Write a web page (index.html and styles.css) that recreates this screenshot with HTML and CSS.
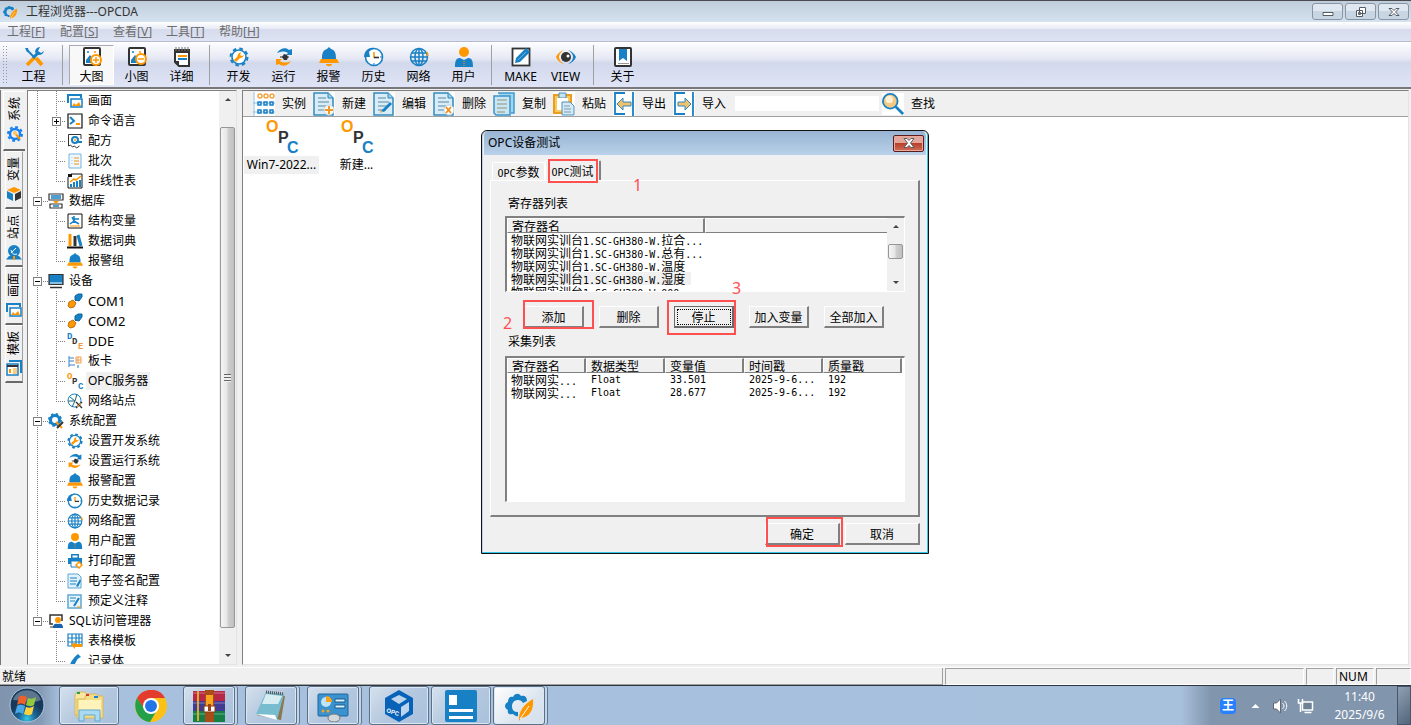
FILE: index.html
```html
<!DOCTYPE html>
<html lang="zh-CN">
<head>
    <meta charset="UTF-8">
    <meta name="viewport" content="width=device-width, initial-scale=1.0">
    <title>工程浏览器---OPCDA</title>
    <link rel="stylesheet" href="styles.css">
</head>
<body>
    <!-- Icon library -->
    <svg class="icon-library" aria-hidden="true">
        <symbol id="i-app" viewBox="0 0 32 32">
            <path d="M15 26c-3 1-4-2-6-2-3 1-5-1-4-4-4-2-4-6 0-8 0-4 2-6 5-5 2-4 6-4 8-1 4-1 6 1 6 5l-4 2c-2-5-11-4-11 3 0 5 3 6 6 6z" fill="#1880c4"/>
            <path d="M30 9c1 10-3 18-12 19l-2 3c-1-9 5-17 14-22z" fill="#ff9800"/>
            <path d="M17 29l9-13" stroke="#fff" stroke-width="1"/>
        </symbol>
        <symbol id="i-tools" viewBox="0 0 20 20">
            <path d="M3 3l7 7" stroke="#1880c4" stroke-width="2"/>
            <path d="M12 11l6 7" stroke="#ff9800" stroke-width="4"/>
            <path d="M1 1l3 0 1 4-2 0z" fill="#1880c4"/>
            <path d="M3 18l8-8" stroke="#ff9800" stroke-width="3.500"/>
            <path d="M9 11l5-5" stroke="#1880c4" stroke-width="3"/>
            <path d="M16 0c-4 0-6 4-4 7 3 2 7 1 8-3l-3 2-3-2z" fill="#1880c4"/>
        </symbol>
        <symbol id="i-large" viewBox="0 0 20 20">
            <rect x="2" y="1" width="16" height="17" rx="1" fill="#fff" stroke="#333" stroke-width="2"/>
            <path d="M4 13l4-5 4 5v3H4z" fill="#1880c4"/><circle cx="6" cy="5" r="1" fill="#1880c4"/><circle cx="13" cy="5" r="1" fill="#ff9800"/>
            <circle cx="14" cy="13" r="5" fill="#fff" stroke="#ff9800" stroke-width="2"/>
            <path d="M11 13h6M14 10v6" stroke="#ff9800" stroke-width="1.500"/>
        </symbol>
        <symbol id="i-small" viewBox="0 0 20 20">
            <rect x="2" y="1" width="16" height="17" rx="1" fill="#fff" stroke="#333" stroke-width="2"/>
            <path d="M4 13l4-5 4 5v3H4z" fill="#1880c4"/><circle cx="6" cy="5" r="1" fill="#1880c4"/><circle cx="13" cy="5" r="1" fill="#ff9800"/>
            <circle cx="14" cy="12" r="5" fill="#fff" stroke="#ff9800" stroke-width="2"/>
            <path d="M11 12h6" stroke="#ff9800" stroke-width="1.500"/>
        </symbol>
        <symbol id="i-detail" viewBox="0 0 20 20">
            <path d="M3 4v11l4 4h10V3" fill="#fff" stroke="#333" stroke-width="2"/>
            <path d="M2 2h16v4H2z" fill="#333"/><path d="M4 0v4M7 0v4M10 0v4M13 0v4M16 0v4" stroke="#777" stroke-width="1"/>
            <path d="M3 14h4v5z" fill="#333"/>
            <path d="M6 9h9" stroke="#ff9800" stroke-width="2"/><path d="M6 12h9" stroke="#1880c4" stroke-width="2"/>
        </symbol>
        <symbol id="i-dev" viewBox="0 0 20 20">
            <circle cx="10" cy="10" r="8.500" fill="none" stroke="#1880c4" stroke-width="2" stroke-dasharray="3.600 3.080"/>
            <circle cx="10" cy="10" r="7" fill="#fff" stroke="#1880c4" stroke-width="1.600"/>
            <path d="M6 14l4-4" stroke="#ff9800" stroke-width="3"/><path d="M12 5c-3 1-4 3-3 5 2 2 5 1 6-2l-2 1-2-1z" fill="#ff9800"/>
        </symbol>
        <symbol id="i-run" viewBox="0 0 20 20">
            <path d="M3 6c3-5 9-6 12-3l3-1v6h-6l2-2c-3-2-7-2-11 0z" fill="#1880c4"/>
            <path d="M17 14c-3 5-9 6-12 3l-3 1v-6h6l-2 2c3 2 7 2 11 0z" fill="#ff9800"/>
            <path d="M10 7l3 1 1 2-1 3-3 0-2-3z" fill="#333"/><path d="M6 10h9" stroke="#333"/>
        </symbol>
        <symbol id="i-bell" viewBox="0 0 20 20">
            <path d="M10 0l2 2c4 1 5 4 5 10H3c0-6 1-9 5-10z" fill="#1880c4"/>
            <path d="M2 12h16l2 4H0z" fill="#ff9800"/><path d="M7 17h6c0 3-6 3-6 0z" fill="#ff9800"/>
        </symbol>
        <symbol id="i-clock" viewBox="0 0 20 20">
            <circle cx="10" cy="10" r="8.500" fill="#fff" stroke="#1880c4" stroke-width="1.600"/>
            <path d="M0 10h6L5 5C8 1 10 3 10 1 4 0 0 5 0 10z" fill="#1880c4"/>
            <path d="M10 5v6" stroke="#ff9800" stroke-width="1.600"/><path d="M10 10.500h5" stroke="#333" stroke-width="1.600"/>
            <path d="M10 18v-2M18 10h-2" stroke="#1880c4"/>
        </symbol>
        <symbol id="i-globe" viewBox="0 0 20 20">
            <g fill="none" stroke="#1880c4" stroke-width="1.500"><circle cx="10" cy="10" r="8.500"/><ellipse cx="10" cy="10" rx="4" ry="8.500"/><path d="M10 1v18M2 10h16M3 6h14M3 14h14"/></g>
            <path d="M18 5l1 4" stroke="#ff9800" stroke-width="1.500"/>
        </symbol>
        <symbol id="i-user" viewBox="0 0 20 20">
            <circle cx="10" cy="5" r="5" fill="#ff9800"/><path d="M1 20c0-6 1-9 5-9l4 2 4-2c4 0 5 3 5 9z" fill="#1880c4"/><path d="M10 14v6" stroke="#ff9800" stroke-dasharray="1 1"/>
        </symbol>
        <symbol id="i-make" viewBox="0 0 20 20">
            <rect x="1.500" y="1.500" width="17" height="17" fill="#fff" stroke="#333" stroke-width="1.800"/>
            <path d="M4 16l1-5L15 1l4 4L9 15z" fill="#1880c4"/><path d="M7 13l8-8" stroke="#69b2e0"/>
        </symbol>
        <symbol id="i-view" viewBox="0 0 20 20">
            <path d="M8 3C5 4 1 7 0 10c1 3 4 6 8 7-3-2-5-4-5-7s2-5 5-7z" fill="#ff9800"/>
            <path d="M12 3c3 1 7 4 8 7-1 3-4 6-8 7 3-2 5-4 5-7s-2-5-5-7z" fill="#1880c4"/>
            <circle cx="10" cy="10" r="5" fill="#333"/><circle cx="12" cy="9" r="1.500" fill="#fff"/>
        </symbol>
        <symbol id="i-about" viewBox="0 0 20 20">
            <rect x="2" y="1" width="16" height="18" rx="1" fill="#fff" stroke="#333" stroke-width="2"/><path d="M6 2h8v12l-4-3-4 3z" fill="#1880c4"/><path d="M5 16.500h11" stroke="#999"/>
        </symbol>
        <symbol id="i-list" viewBox="0 0 22 24">
            <path fill="#fff" d="M0 0h22v24H0z"/><path d="M1 0v24M0 11h22M0 20h22" stroke="#8bbcdf"/>
            <g fill="none" stroke-width="1.500"><g stroke="#f0a443"><circle cx="7" cy="4" r="2"/><circle cx="13" cy="4" r="2"/><circle cx="19" cy="4" r="2"/></g><g stroke="#1880c4"><path d="M5 10h3v3H5zM11 10h3v3h-3zM17 10h3v3h-3zM5 18h3v3H5zM11 18h3v3h-3zM17 18h3v3h-3z"/></g></g>
        </symbol>
        <symbol id="i-doc" viewBox="0 0 22 24">
            <path fill="#fff" d="M0 0h22v24H0z"/><path d="M1 1h14l5 5v17H1z" fill="#d9edf8" stroke="#3188bd" stroke-width="1.500"/><path d="M15 1v5h5" fill="#9bd0ec" stroke="#3188bd"/>
            <path d="M5 6h8M5 10h11M5 14h10M5 18h8" stroke="#87aabd" stroke-width="1.400"/>
        </symbol>
        <symbol id="i-new" viewBox="0 0 22 24"><use href="#i-doc"/><circle cx="16" cy="18" r="5" fill="#fff9eb" stroke="#c0d9e7"/><path d="M12 18h8M16 14v8" stroke="#f29626" stroke-width="2"/></symbol>
        <symbol id="i-edit" viewBox="0 0 22 24"><use href="#i-doc"/><path d="M8 19l9-9 2 2-8 8z" fill="#1880c4"/><path d="M9 20l-2 1 1-3" fill="#f29626"/></symbol>
        <symbol id="i-delete" viewBox="0 0 22 24"><use href="#i-doc"/><circle cx="16" cy="18" r="5" fill="#fff" stroke="#bdd5e4"/><path d="M13 15l5 6M18 15l-5 6" stroke="#f28c16" stroke-width="1.800"/></symbol>
        <symbol id="i-copy" viewBox="0 0 22 24"><path d="M5 1h16v20h-3" fill="#9ed7ef" stroke="#3c9bd0" stroke-width="1.500"/><path d="M1 4h16v19H3l-2-2z" fill="#c8e6f5" stroke="#3c93c8" stroke-width="1.500"/><path d="M4 8h10M4 12h10M4 16h10M4 20h8" stroke="#a7ae9a" stroke-width="1.500"/></symbol>
        <symbol id="i-paste" viewBox="0 0 22 24"><path fill="#fff" d="M0 0h22v24H0z"/><path d="M1 3h17v18H1z" fill="#f8c95b" stroke="#ec9c1f" stroke-width="2"/><path d="M6 1h7v5H6z" fill="#c5e4f4" stroke="#488eb7"/><path d="M4 6h11v12H4z" fill="#fff"/><path d="M9 10h8l4 4v9H9z" fill="#d5eaf6" stroke="#508eb4"/><path d="M11 14h6M11 17h7M11 20h7" stroke="#749db5"/></symbol>
        <symbol id="i-export" viewBox="0 0 22 24"><path fill="#fff" d="M0 0h22v24H0z"/><path d="M12 1H2v21h10M20 0v24" fill="none" stroke="#1880c4" stroke-width="1.800"/><path d="M4 12l6-6v4h8v4h-8v4z" fill="#f3c16c" stroke="#2f88bd"/></symbol>
        <symbol id="i-import" viewBox="0 0 22 24"><path fill="#fff" d="M0 0h22v24H0z"/><path d="M12 1H2v21h10M20 0v24" fill="none" stroke="#1880c4" stroke-width="1.800"/><path d="M18 12l-6-6v4H5v4h7v4z" fill="#f3c16c" stroke="#2f88bd"/></symbol>
        <symbol id="i-search" viewBox="0 0 24 24"><path fill="#fff" d="M0 0h24v24H0z"/><path d="M15 15l8 8" stroke="#1880c4" stroke-width="3"/><circle cx="9" cy="9" r="8" fill="#f4ca82" stroke="#1880c4" stroke-width="2"/><circle cx="8" cy="7" r="4" fill="#fff1d5"/></symbol>
        <symbol id="i-picture" viewBox="0 0 16 16"><path d="M1 10V2h13v3" fill="none" stroke="#1880c4" stroke-width="2"/><path d="M4 6h11v8H4z" fill="#fff" stroke="#1880c4" stroke-width="1.500"/><path d="M5 13l2-3 2 2 3-3 2 4z" fill="#ff9800"/></symbol>
        <symbol id="i-command" viewBox="0 0 16 16"><path d="M1 1h14v14H1z" fill="#fff" stroke="#111" stroke-width="1.200"/><path d="M3 4l4 4-4 3" fill="none" stroke="#1880c4" stroke-width="2"/><path d="M9 11h4" stroke="#ff9800" stroke-width="2"/></symbol>
        <symbol id="i-recipe" viewBox="0 0 16 16"><path d="M14 6V1.500H1.500V13l2-1 2 2 2-1 2 2 3-2" fill="#fff" stroke="#333"/><circle cx="8" cy="7" r="3" fill="#fff" stroke="#1880c4" stroke-width="2"/><path d="M9 9h6" stroke="#1880c4" stroke-width="2"/><circle cx="8" cy="7" r="1" fill="#ff9800"/></symbol>
        <symbol id="i-batch" viewBox="0 0 16 16"><path d="M2 1h12v14H2z" fill="#eef8fe" stroke="#76b5de"/><path d="M5 4v9" stroke="#9cc9e7" stroke-dasharray="1 2"/><path d="M7 5h5M7 8h5M7 11h5" stroke="#f2c48b" stroke-width="2"/></symbol>
        <symbol id="i-chart" viewBox="0 0 16 16"><path d="M4 1h11v14H1V4z" fill="#fff" stroke="#111"/><path d="M1 1h4v3H1z" fill="#111"/><path d="M4 14v-3M7 14v-5M10 14V8M13 14V7" stroke="#1880c4" stroke-width="2"/><path d="M3 9l4-3 2 1 5-4" fill="none" stroke="#ff9800" stroke-width="1.500"/></symbol>
        <symbol id="i-database" viewBox="0 0 16 16"><path d="M1 1h14v6H1zM2 11h12v4H2z" fill="#fff" stroke="#333" stroke-width="1.200"/><path d="M3 3h10M3 5h10M5 13h6" stroke="#1880c4" stroke-width="1.300"/><path d="M5 8h6l-3 3z" fill="#ff9800"/></symbol>
        <symbol id="i-struct" viewBox="0 0 16 16"><path d="M1 1h14v14H1z" fill="#fff" stroke="#111"/><path d="M7 3v5l-4 3M7 8l5 3M7 6h5M5 4l2 4" fill="none" stroke="#1880c4" stroke-width="1.500"/><path d="M3 13h10" stroke="#ff9800"/></symbol>
        <symbol id="i-books" viewBox="0 0 16 16"><path d="M3 1v12" stroke="#ff9800" stroke-width="3"/><path d="M8 3v10" stroke="#333" stroke-width="3"/><path d="M11 2l3 11" stroke="#1880c4" stroke-width="3"/><path d="M0 14.500h16" stroke="#111" stroke-width="2"/></symbol>
        <symbol id="i-monitor" viewBox="0 0 16 16"><path d="M1 1.500h14v10H1z" fill="#1880c4" stroke="#333" stroke-width="1.200"/><path d="M2 10h12" stroke="#fff"/><path d="M2 14.500h12" stroke="#333" stroke-width="1.500"/></symbol>
        <symbol id="i-plug" viewBox="0 0 16 16"><path d="M15 1L7 9" stroke="#333"/><path d="M8 3l3-2h4v3l-3 4-4-1z" fill="#1880c4" stroke="#0b66a4"/><path d="M2 9l4-2 3 3-2 4-4 1-2-2z" fill="#ff9800" stroke="#b77418"/></symbol>
        <symbol id="i-card" viewBox="0 0 16 16"><path d="M2 3v11M2 5h5M2 8h5M2 12h6" stroke="#3b83c6"/><path d="M9 4h5v6H9zM9 7h5M11 4v6" fill="none" stroke="#ef9b4a"/><path d="M11 12v3" stroke="#1880c4"/></symbol>
        <symbol id="i-net" viewBox="0 0 16 16"><circle cx="7.500" cy="7.500" r="6.500" fill="#fff" stroke="#1880c4"/><path d="M1 8h7M3 4l5 4 2-7M8 8l-3 6" fill="none" stroke="#267"/><path d="M9 9l6 6M15 9l-6 6" stroke="#333" stroke-width="1.400"/><path d="M10 14l4-4" stroke="#ff9800"/></symbol>
        <symbol id="i-config" viewBox="0 0 16 16"><circle cx="7" cy="7" r="4.500" fill="none" stroke="#1880c4" stroke-width="3"/><circle cx="7" cy="7" r="6" fill="none" stroke="#1880c4" stroke-width="2" stroke-dasharray="2.400 2.310"/><path d="M8 9l6 6" stroke="#ff9800" stroke-width="2"/><path d="M15 9l-6 6" stroke="#333" stroke-width="2"/></symbol>
        <symbol id="i-printer" viewBox="0 0 16 16"><path d="M4 5V1h8v4M1 5h14v6H1z" fill="#1880c4"/><path d="M5 2h6v3H5zM4 8h8v6H4z" fill="#fff" stroke="#1880c4"/><path d="M12 9l3 3-3 3-3-3z" fill="#fff" stroke="#ff9800" stroke-width="1.500"/></symbol>
        <symbol id="i-sign" viewBox="0 0 16 16"><path d="M1 1h10l3 3v11H1z" fill="#e3f2fa" stroke="#5da7d4"/><path d="M3 5h7M3 8h7M3 11h6" stroke="#1880c4"/><path d="M9 13l4-7 1 2-3 6z" fill="#1880c4"/></symbol>
        <symbol id="i-note" viewBox="0 0 16 16"><path d="M1 2h13v13H1z" fill="#e8f5fb" stroke="#5da7d4" stroke-width="1.500"/><path d="M3 5h6M3 8h5" stroke="#1880c4"/><path d="M7 13l5-8" stroke="#1880c4" stroke-width="2"/><path d="M10 14h4" stroke="#ff9800"/></symbol>
        <symbol id="i-sql" viewBox="0 0 16 16"><path d="M5 11H2V2h12v6" fill="none" stroke="#333" stroke-width="1.500"/><circle cx="10" cy="7" r="3" fill="#ff9800"/><path d="M5 15c0-4 2-5 5-4 4-1 5 1 5 4z" fill="#1761ad"/><path d="M2 14h4" stroke="#333"/></symbol>
        <symbol id="i-table" viewBox="0 0 16 16"><path d="M1 1h14v12H1zM1 5h14M1 9h14M5 1v12M9 1v12M12 1v12" fill="#fff" stroke="#1880c4" stroke-width="1.200"/><path d="M4 12l4-3v2h7v3H8v2z" fill="#ff9800"/></symbol>
        <symbol id="i-pen" viewBox="0 0 16 16"><path d="M2 15c1-5 4-10 9-14l3 3c-4 1-5 5-7 9z" fill="#1880c4"/><path d="M1 15h5" stroke="#333"/></symbol>
        <symbol id="i-gear" viewBox="0 0 16 16"><circle cx="8" cy="8" r="5" fill="none" stroke="#1880f0" stroke-width="2.500"/><circle cx="8" cy="8" r="7" fill="none" stroke="#1880f0" stroke-width="2" stroke-dasharray="2.800 2.700"/><path d="M7 6l6 7" stroke="#ff9800" stroke-width="2"/><circle cx="8" cy="7" r="2" fill="#ffc56c"/></symbol>
        <symbol id="i-cube" viewBox="0 0 16 16"><path d="M8 1l7 3-7 3-7-3z" fill="#ff9800"/><path d="M1 5l6 3v7l-6-3z" fill="#1880c4"/><path d="M15 5L9 8v7l6-3z" fill="#333"/></symbol>
        <symbol id="i-station" viewBox="0 0 16 16"><circle cx="8" cy="7" r="6" fill="#1880c4"/><path d="M5 9l5-5M5 6c1 4 3 5 6 4" fill="none" stroke="#fff"/><path d="M0 15.500l3-3.500h10l3 3.500z" fill="#1880c4"/><path d="M8 12v4" stroke="#ff9800" stroke-width="2"/></symbol>
        <symbol id="i-template" viewBox="0 0 16 16"><path d="M3 1h12v12" fill="none" stroke="#1880c4" stroke-width="2"/><path d="M1 4h11v11H1z" fill="#fff" stroke="#1880c4" stroke-width="1.500"/><path d="M1 6h11" stroke="#333" stroke-width="2"/><path d="M3 9h2v4H3z" fill="#ff9800"/><path d="M7 9h4M7 11h4M7 13h4" stroke="#ff9800"/></symbol>
    </svg>

    <!-- Title bar -->
    <header class="titlebar">
        <svg class="title-icon"><use href="#i-app"/></svg>
        <h1>工程浏览器---OPCDA</h1>
        <div class="window-buttons">
            <button aria-label="最小化"><svg viewBox="0 0 16 12"><path d="M3 6.500h10v3H3z"/></svg></button>
            <button aria-label="还原"><svg viewBox="0 0 16 12"><path d="M6.500 1.500h6v6h-6zM3.500 4.500h6v6h-6zM5.500 6.500h2v2h-2z"/></svg></button>
            <button aria-label="关闭"><svg viewBox="0 0 16 12"><path d="M3 2.500h3l2 2 2-2h3L9.500 6l3.500 3.500h-3l-2-2-2 2H3L6.500 6z"/></svg></button>
        </div>
    </header>

    <nav class="menubar">
        <button>工程[<u>F</u>]</button>
        <button>配置[<u>S</u>]</button>
        <button>查看[<u>V</u>]</button>
        <button>工具[<u>T</u>]</button>
        <button>帮助[<u>H</u>]</button>
    </nav>

    <!-- Main toolbar -->
    <div class="toolbar">
        <span class="gripper"></span>
        <button class="tool"><svg><use href="#i-tools"/></svg>工程</button>
        <span class="separator"></span>
        <button class="tool active"><svg><use href="#i-large"/></svg>大图</button>
        <button class="tool"><svg><use href="#i-small"/></svg>小图</button>
        <button class="tool"><svg><use href="#i-detail"/></svg>详细</button>
        <span class="separator"></span>
        <button class="tool"><svg><use href="#i-dev"/></svg>开发</button>
        <button class="tool"><svg><use href="#i-run"/></svg>运行</button>
        <button class="tool"><svg><use href="#i-bell"/></svg>报警</button>
        <button class="tool"><svg><use href="#i-clock"/></svg>历史</button>
        <button class="tool"><svg><use href="#i-globe"/></svg>网络</button>
        <button class="tool"><svg><use href="#i-user"/></svg>用户</button>
        <span class="separator"></span>
        <button class="tool"><svg><use href="#i-make"/></svg>MAKE</button>
        <button class="tool"><svg><use href="#i-view"/></svg>VIEW</button>
        <span class="separator"></span>
        <button class="tool"><svg><use href="#i-about"/></svg>关于</button>
    </div>

    <main class="workspace">
        <!-- Side tabs -->
        <div class="side-tabs">
            <button class="side-tab active"><span>系统</span><svg><use href="#i-gear"/></svg></button>
            <button class="side-tab"><span>变量</span><svg><use href="#i-cube"/></svg></button>
            <button class="side-tab"><span>站点</span><svg><use href="#i-station"/></svg></button>
            <button class="side-tab"><span>画面</span><svg><use href="#i-picture"/></svg></button>
            <button class="side-tab"><span>模板</span><svg><use href="#i-template"/></svg></button>
        </div>

        <!-- Project tree -->
        <aside class="tree-panel">
            <ul class="tree">
                <li class="branch">
                    <ul>
                        <li class="leaf"><svg><use href="#i-picture"/></svg><span>画面</span></li>
                        <li class="leaf expandable"><button class="toggle plus" aria-label="展开"></button><svg><use href="#i-command"/></svg><span>命令语言</span></li>
                        <li class="leaf"><svg><use href="#i-recipe"/></svg><span>配方</span></li>
                        <li class="leaf"><svg><use href="#i-batch"/></svg><span>批次</span></li>
                        <li class="leaf"><svg><use href="#i-chart"/></svg><span>非线性表</span></li>
                    </ul>
                </li>
                <li class="branch">
                    <div class="branch-row"><button class="toggle" aria-label="折叠"></button><svg><use href="#i-database"/></svg><span>数据库</span></div>
                    <ul>
                        <li class="leaf"><svg><use href="#i-struct"/></svg><span>结构变量</span></li>
                        <li class="leaf"><svg><use href="#i-books"/></svg><span>数据词典</span></li>
                        <li class="leaf"><svg><use href="#i-bell"/></svg><span>报警组</span></li>
                    </ul>
                </li>
                <li class="branch">
                    <div class="branch-row"><button class="toggle" aria-label="折叠"></button><svg><use href="#i-monitor"/></svg><span>设备</span></div>
                    <ul>
                        <li class="leaf"><svg><use href="#i-plug"/></svg><span class="latin">COM1</span></li>
                        <li class="leaf"><svg><use href="#i-plug"/></svg><span class="latin">COM2</span></li>
                        <li class="leaf">
                            <svg class="letters" viewBox="0 0 16 16"><text x="0" y="6" fill="#1880c4">D</text><text x="5" y="11" fill="#333">D</text><text x="11" y="16" fill="#ef9b4a">E</text></svg>
                            <span class="latin">DDE</span>
                        </li>
                        <li class="leaf"><svg><use href="#i-card"/></svg><span>板卡</span></li>
                        <li class="leaf selected">
                            <svg class="letters" viewBox="0 0 16 16"><text x="0" y="6" fill="#ff9800">O</text><text x="5" y="11" fill="#333">P</text><text x="11" y="16" fill="#1880c4">C</text></svg>
                            <span>OPC服务器</span>
                        </li>
                        <li class="leaf"><svg><use href="#i-net"/></svg><span>网络站点</span></li>
                    </ul>
                </li>
                <li class="branch">
                    <div class="branch-row"><button class="toggle" aria-label="折叠"></button><svg><use href="#i-config"/></svg><span>系统配置</span></div>
                    <ul>
                        <li class="leaf"><svg><use href="#i-dev"/></svg><span>设置开发系统</span></li>
                        <li class="leaf"><svg><use href="#i-run"/></svg><span>设置运行系统</span></li>
                        <li class="leaf"><svg><use href="#i-bell"/></svg><span>报警配置</span></li>
                        <li class="leaf"><svg><use href="#i-clock"/></svg><span>历史数据记录</span></li>
                        <li class="leaf"><svg><use href="#i-globe"/></svg><span>网络配置</span></li>
                        <li class="leaf"><svg><use href="#i-user"/></svg><span>用户配置</span></li>
                        <li class="leaf"><svg><use href="#i-printer"/></svg><span>打印配置</span></li>
                        <li class="leaf"><svg><use href="#i-sign"/></svg><span>电子签名配置</span></li>
                        <li class="leaf"><svg><use href="#i-note"/></svg><span>预定义注释</span></li>
                    </ul>
                </li>
                <li class="branch">
                    <div class="branch-row"><button class="toggle" aria-label="折叠"></button><svg><use href="#i-sql"/></svg><span>SQL访问管理器</span></div>
                    <ul>
                        <li class="leaf"><svg><use href="#i-table"/></svg><span>表格模板</span></li>
                        <li class="leaf"><svg><use href="#i-pen"/></svg><span>记录体</span></li>
                    </ul>
                </li>
            </ul>
            <div class="scrollbar">
                <button class="arrow up" aria-label="向上"></button>
                <div class="track"><div class="thumb tree-thumb"></div></div>
                <button class="arrow down" aria-label="向下"></button>
            </div>
        </aside>

        <!-- Content -->
        <section class="content">
            <div class="actions">
                <button class="action"><svg><use href="#i-list"/></svg>实例</button>
                <button class="action"><svg><use href="#i-new"/></svg>新建</button>
                <button class="action"><svg><use href="#i-edit"/></svg>编辑</button>
                <button class="action"><svg><use href="#i-delete"/></svg>删除</button>
                <button class="action"><svg><use href="#i-copy"/></svg>复制</button>
                <button class="action"><svg><use href="#i-paste"/></svg>粘贴</button>
                <button class="action"><svg><use href="#i-export"/></svg>导出</button>
                <button class="action"><svg><use href="#i-import"/></svg>导入</button>
                <input class="search-box" type="text" aria-label="查找内容">
                <button class="action"><svg><use href="#i-search"/></svg>查找</button>
            </div>
            <div class="files">
                <div class="file selected">
                    <svg class="letters-large" viewBox="0 0 32 33"><text x="0" y="11" fill="#ff9800">O</text><text x="12" y="22" fill="#333">P</text><text x="21" y="32" fill="#1880c4">C</text></svg>
                    <span>Win7-2022...</span>
                </div>
                <div class="file">
                    <svg class="letters-large" viewBox="0 0 32 33"><text x="0" y="11" fill="#ff9800">O</text><text x="12" y="22" fill="#333">P</text><text x="21" y="32" fill="#1880c4">C</text></svg>
                    <span>新建...</span>
                </div>
            </div>
        </section>
    </main>

    <footer class="statusbar">
        <span class="status-text">就绪</span>
        <span class="status-cell wide"></span>
        <span class="status-cell small"></span>
        <span class="status-cell num">NUM</span>
        <span class="status-cell last"></span>
    </footer>

    <!-- Taskbar -->
    <div class="taskbar">
        <button class="start" aria-label="开始">
            <svg viewBox="0 0 36 36">
                <defs><radialGradient id="orb" cy="0.900"><stop offset="0" stop-color="#35c8e8"/><stop offset="0.500" stop-color="#1c6595"/><stop offset="1" stop-color="#173a5c"/></radialGradient></defs>
                <circle cx="18" cy="18" r="17" fill="url(#orb)" stroke="#b2c7da"/>
                <path d="M4 13C8 0 28 0 32 13c-8 4-20 0-28 0z" fill="#fff" opacity=".3"/>
                <path d="M10 10c3-2 5-1 8 0l-2 8c-3-2-5-2-8 0z" fill="#f0602a"/><path d="M19 11c3 1 5 1 8-1l-2 8c-3 2-5 1-8 0z" fill="#94c83d"/>
                <path d="M8 19c3-2 5-1 8 0l-2 8c-3-2-5-2-8 0z" fill="#4aa8e8"/><path d="M17 20c3 1 5 1 8-1l-2 8c-3 2-5 1-8 0z" fill="#ffd23e"/>
            </svg>
        </button>
        <button class="task framed" aria-label="资源管理器">
            <svg viewBox="0 0 32 32"><path d="M2 5l2-3h8l2 3v20H2z" fill="#f8e7a0" stroke="#d5b758"/><path d="M12 7l2-3h9l2 2h5v22H4V9h8z" fill="#f6dc85" stroke="#d8b95f"/><path d="M6 10h22v14H6z" fill="#fff3bc"/><path d="M4 3h3" stroke="#29a046" stroke-width="2"/><path d="M13 5h3" stroke="#d5342a" stroke-width="2"/><path d="M21 7h4" stroke="#1683d8" stroke-width="2"/><path d="M6 31V20h21v11h-5v-6H11v6z" fill="#a9daf1" stroke="#60a9d0"/></svg>
        </button>
        <button class="task" aria-label="Chrome">
            <svg viewBox="0 0 32 32"><circle cx="16" cy="16" r="16" fill="#fbc116"/><path d="M2 8C8-3 25-3 30 8H16v8H7z" fill="#e33b2e"/><path d="M2 8C-3 18 3 31 15 32l7-12-12 0z" fill="#24a148"/><circle cx="16" cy="16" r="8" fill="#fff"/><circle cx="16" cy="16" r="6" fill="#2374e8"/></svg>
        </button>
        <button class="task framed stacked" aria-label="WinRAR">
            <svg viewBox="0 0 32 32"><path d="M0 1h32v10H0z" fill="#b72748"/><path d="M0 11h32v10H0z" fill="#413b93"/><path d="M0 21h32v11H0z" fill="#167f47"/><path d="M0 3h32M0 13h32M0 24h32" stroke="#fff" opacity=".35"/><path d="M5 1v30" stroke="#dcac29" stroke-width="2"/><path d="M12 0h9v32h-9z" fill="#a84c18"/><path d="M13 5h7v11h-7z" fill="#f7a51f"/><path d="M11 16h11v6H11z" fill="#fff" stroke="#883c16"/><path d="M15 14h3v7h-3z" fill="#9d4217"/></svg>
        </button>
        <button class="task framed stacked" aria-label="记事本">
            <svg viewBox="0 0 32 32"><path d="M12 3l18 3-4 24L2 25z" fill="#8a7850"/><path d="M11 2l18 2-7 26-21-6z" fill="#78bdcf"/><path d="M11 4l16 2-4 8L7 14z" fill="#d7edf1"/><path d="M1 24l19 1 2 5z" fill="#fff"/><path d="M11 2l18 2" stroke="#555" stroke-width="3" stroke-dasharray="1 1"/></svg>
        </button>
        <button class="task framed stacked" aria-label="控制面板">
            <svg viewBox="0 0 32 32"><rect x="1" y="4" width="30" height="22" rx="1" fill="#3a92ce" stroke="#1d669e"/><circle cx="9" cy="12" r="5" fill="#bfe4f7"/><path d="M9 12V6c4 0 6 3 6 6z" fill="#f7a21b"/><path d="M18 9h10v3H18zM18 15h10v3H18z" fill="#d7f2ff" stroke="#1b5a89"/><circle cx="6" cy="21" r="1.500" fill="#f7a21b"/><circle cx="11" cy="21" r="1.500" fill="#f7a21b"/><ellipse cx="17" cy="28" rx="6" ry="4" fill="#d4d8db" stroke="#777"/></svg>
        </button>
        <button class="task framed" aria-label="OPC">
            <svg viewBox="0 0 32 32"><path d="M16 0l14 8v16l-14 8L2 24V8z" fill="#0762b8"/><path d="M16 5l8 4-8 5-8-5zM18 17l8-5v9l-8 6z" fill="#bdd5ec"/><text x="3" y="22" transform="rotate(18 3 22)" font-family="Liberation Sans, sans-serif" font-size="6" font-weight="bold" fill="#fff">OPC</text></svg>
        </button>
        <button class="task framed" aria-label="组态">
            <svg viewBox="0 0 32 32"><rect width="32" height="32" rx="2" fill="#1880c4"/><path d="M4 5h8v10H4zM4 19h24v3H4zM4 26h24v3H4z" fill="#fff"/></svg>
        </button>
        <button class="task framed stacked current" aria-label="工程浏览器"><svg><use href="#i-app"/></svg></button>
        <div class="tray">
            <span class="ime">王</span>
            <svg viewBox="0 0 16 16"><path d="M4 10l4-4 4 4z" fill="#fff"/></svg>
            <svg viewBox="0 0 16 16"><path d="M1 5h3l4-4v14l-4-4H1z" fill="#fff" stroke="#667"/><path d="M10 5c2 2 2 4 0 6M12 3c3 3 3 7 0 10" fill="none" stroke="#fff"/></svg>
            <svg viewBox="0 0 16 16"><path d="M5 4h10v8H5z" fill="#6f8194" stroke="#fff" stroke-width="1.500"/><path d="M1 1v4h4V1M3 5v9M7 14.500h7" fill="none" stroke="#fff" stroke-width="1.500"/></svg>
            <time class="clock">11:40<br>2025/9/6</time>
        </div>
        <button class="show-desktop" aria-label="显示桌面"></button>
    </div>

    <!-- OPC test dialog -->
    <div class="dialog" role="dialog" aria-labelledby="dialogTitle">
        <div class="dialog-title">
            <h2 id="dialogTitle">OPC设备测试</h2>
            <button class="dialog-close" aria-label="关闭"><svg viewBox="0 0 12 10"><path d="M1 .5h3l2 2 2-2h3L7.500 5l3.500 4.500H8l-2-2-2 2H1L4.500 5z"/></svg></button>
        </div>
        <div class="dialog-body">
            <div class="tabs">
                <button class="tab"><span class="mono">OPC</span>参数</button>
                <button class="tab active marked mark-tab"><span class="mono">OPC</span>测试</button>
            </div>
            <div class="tab-page">
                <h3>寄存器列表</h3>
                <div class="listbox register-list">
                    <div class="list-view">
                        <table class="register-table">
                            <thead><tr><th>寄存器名</th><th></th></tr></thead>
                            <tbody>
                                <tr><td colspan="2"><span>物联网实训台<span class="mono">1.SC-GH380-W.</span>拉合<span class="mono">...</span></span></td></tr>
                                <tr><td colspan="2"><span>物联网实训台<span class="mono">1.SC-GH380-W.</span>总有<span class="mono">...</span></span></td></tr>
                                <tr><td colspan="2"><span>物联网实训台<span class="mono">1.SC-GH380-W.</span>温度</span></td></tr>
                                <tr class="selected"><td colspan="2"><span>物联网实训台<span class="mono">1.SC-GH380-W.</span>湿度</span></td></tr>
                                <tr><td colspan="2"><span>物联网实训台<span class="mono">1.SC-GH380-W.000</span></span></td></tr>
                            </tbody>
                        </table>
                    </div>
                    <div class="scrollbar">
                        <button class="arrow up" aria-label="向上"></button>
                        <div class="track"><div class="thumb list-thumb"></div></div>
                        <button class="arrow down" aria-label="向下"></button>
                    </div>
                </div>
                <div class="list-buttons">
                    <button class="btn marked mark-add">添加</button>
                    <button class="btn">删除</button>
                    <button class="btn default marked mark-stop">停止</button>
                    <button class="btn">加入变量</button>
                    <button class="btn">全部加入</button>
                </div>
                <h3>采集列表</h3>
                <div class="listbox collect-list">
                    <table class="collect-table">
                        <thead><tr><th>寄存器名</th><th>数据类型</th><th>变量值</th><th>时间戳</th><th>质量戳</th></tr></thead>
                        <tbody>
                            <tr><td>物联网实<span class="mono">...</span></td><td class="mono">Float</td><td class="mono">33.501</td><td class="mono">2025-9-6...</td><td class="mono">192</td></tr>
                            <tr><td>物联网实<span class="mono">...</span></td><td class="mono">Float</td><td class="mono">28.677</td><td class="mono">2025-9-6...</td><td class="mono">192</td></tr>
                        </tbody>
                    </table>
                </div>
            </div>
            <div class="dialog-buttons">
                <button class="btn marked mark-ok">确定</button>
                <button class="btn">取消</button>
            </div>
        </div>
        <span class="step step-1">1</span>
        <span class="step step-2">2</span>
        <span class="step step-3">3</span>
    </div>
</body>
</html>
```
FILE: styles.css
```css
:root {
    --dots-v: repeating-linear-gradient(to bottom, #808080 0 1px, transparent 1px 2px);
    --dots-h: repeating-linear-gradient(to right, #808080 0 1px, transparent 1px 2px);
    --red: #ff5050;
}

* {
    box-sizing: border-box;
}

body {
    margin: 0;
    height: 100vh;
    display: flex;
    flex-direction: column;
    overflow: hidden;
    background: #f0f0f0;
    color: #000;
    font: 12px/20px "Noto Sans", "Noto Sans CJK SC", sans-serif;
}

button {
    padding: 0;
    border: none;
    background: none;
    color: inherit;
    font: inherit;
}

h1, h2, h3 {
    margin: 0;
    font-size: 12px;
    font-weight: normal;
}

ul {
    margin: 0;
    padding: 0;
    list-style: none;
}

svg {
    flex: none;
}

.icon-library {
    position: absolute;
    width: 0;
    height: 0;
}

.latin {
    font-size: 13px;
}

/* Title bar */
.titlebar {
    flex: none;
    height: 22px;
    display: flex;
    align-items: center;
    border-top: 1px solid #4a4a50;
    background: linear-gradient(#bfccd9, #d5e2ef);
    color: #333;
}

.title-icon {
    width: 16px;
    height: 16px;
    margin: 0 8px 0 2px;
}

.window-buttons {
    display: flex;
    gap: 2px;
    margin-left: auto;
    padding-right: 2px;
}

.window-buttons button {
    display: flex;
    align-items: center;
    justify-content: center;
    width: 31px;
    height: 17px;
    border: 1px solid #8995a3;
    border-radius: 3px;
    background: linear-gradient(#dfe8f1 50%, #c8d5e2 50%);
}

.window-buttons svg {
    width: 16px;
    height: 12px;
    fill: #fff;
    stroke: #545c66;
}

/* Menu bar */
.menubar {
    flex: none;
    display: flex;
    height: 20px;
    border-bottom: 1px solid #b6bccc;
    background: linear-gradient(#fff, #e8ebf5 35%, #d6dbed 40%, #dfe4f4);
    color: #6d6d6d;
}

.menubar button {
    width: 53px;
    padding-left: 7px;
    text-align: left;
    line-height: 18px;
}

/* Main toolbar */
.toolbar {
    flex: none;
    display: flex;
    height: 47px;
    padding: 2px 0;
    border-top: 1px solid #fff;
    border-bottom: 2px solid #77777c;
    background: linear-gradient(#fbfcfe, #e6e9f4 35%, #d3d9ec 45%, #dfe5f6);
}

.gripper {
    width: 6px;
    margin: 0 3px 0 2px;
    background: radial-gradient(#999 1px, transparent 1px) 0 0 / 3px 3px;
}

.tool {
    display: flex;
    flex-direction: column;
    align-items: center;
    width: 45px;
    padding-top: 2px;
    line-height: 20px;
}

.toolbar .gripper + .tool {
    margin-right: 1px;
}

.tool svg {
    width: 20px;
    height: 20px;
}

.tool.active {
    padding-top: 1px;
    border: 1px solid #aaa;
    border-right-color: #fff;
    border-bottom-color: #fff;
    background: #f8f8f8;
}

.separator {
    width: 12px;
    background: linear-gradient(#a0a0a0, #a0a0a0) 5px 0 / 1px 100% no-repeat;
}

/* Workspace */
.workspace {
    flex: 1;
    display: flex;
    min-height: 0;
    padding: 1px 2px 2px 0;
}

.side-tabs {
    width: 27px;
    flex: none;
    padding: 1px 3px 0 4px;
    border-left: 1px solid #777;
}

.side-tab {
    display: flex;
    flex-direction: column;
    align-items: center;
    gap: 5px;
    width: 18px;
    height: 58px;
    padding-top: 5px;
    border: 1px solid #fff;
    border-right-color: #a0a0a0;
    border-bottom: 2px solid #696969;
}

.side-tab.active {
    height: 60px;
    margin-left: -2px;
    width: 22px;
    border-right: none;
}

.side-tab span {
    writing-mode: vertical-rl;
    text-orientation: sideways;
    transform: rotate(180deg);
    line-height: 16px;
}

.side-tab svg {
    width: 16px;
    height: 16px;
}

.tree-panel {
    display: flex;
    flex: none;
    width: 210px;
    border: 1px solid #808080;
    border-right-color: #e3e3e3;
    border-bottom-color: #e3e3e3;
    background: #fff;
    overflow: hidden;
}

.tree {
    flex: 1;
    height: 100%;
    overflow: hidden;
}

.branch {
    background: var(--dots-v) 9px 0 / 1px 100% no-repeat;
}

.branch:last-child {
    background-size: 1px 10px;
}

.branch-row,
.leaf {
    display: flex;
    align-items: center;
    height: 20px;
}

.branch-row {
    gap: 5px;
    padding-left: 5px;
    background: var(--dots-h) 9px 10px / 12px 1px no-repeat;
}

.leaf {
    gap: 5px;
    padding-left: 39px;
    background: var(--dots-v) 28px 0 / 1px 100% no-repeat, var(--dots-h) 28px 10px / 10px 1px no-repeat;
}

.leaf:last-child {
    background-size: 1px 10px, 10px 1px;
}

.leaf.expandable {
    padding-left: 24px;
}

.tree svg {
    width: 16px;
    height: 16px;
}

.tree li span {
    line-height: 18px;
}

.leaf.selected span {
    margin-left: -2px;
    padding: 0 2px;
    background: #f0f0f0;
}

.letters {
    overflow: visible;
    font: bold 9px "Liberation Mono", monospace;
}

.letters-large {
    overflow: visible;
    font: bold 16px "Liberation Sans", sans-serif;
}

.toggle {
    width: 9px;
    height: 9px;
    flex: none;
    border: 1px solid #808080;
    background: linear-gradient(#000, #000) 1px 3px / 5px 1px no-repeat #fff;
}

.branch-row .toggle {
    margin-right: 1px;
}

.toggle.plus {
    margin-right: 1px;
    background: linear-gradient(#000, #000) 1px 3px / 5px 1px no-repeat, linear-gradient(#000, #000) 3px 1px / 1px 5px no-repeat #fff;
}

/* Scrollbars */
.scrollbar {
    display: flex;
    flex-direction: column;
    width: 17px;
    flex: none;
    background: #f0f0f0;
}

.arrow {
    display: flex;
    align-items: center;
    justify-content: center;
    height: 17px;
    flex: none;
}

.arrow::before {
    content: "";
    border: 3px solid transparent;
}

.arrow.up::before {
    border-top: none;
    border-bottom-color: #444;
}

.arrow.down::before {
    border-bottom: none;
    border-top-color: #444;
}

.track {
    flex: 1;
    min-height: 0;
}

.thumb {
    display: flex;
    align-items: center;
    justify-content: center;
    margin: 0 1px;
    border: 1px solid #979797;
    border-radius: 2px;
    background: linear-gradient(to right, #f5f5f5, #e6e6e6 45%, #cfcfcf 55%, #c0c0c4);
}

.tree-thumb {
    height: 93%;
    margin-top: 19px;
}

.tree-thumb::before {
    content: "";
    width: 7px;
    height: 8px;
    background: repeating-linear-gradient(#666 0 1px, #eee 1px 3px);
}

.list-thumb {
    height: 15px;
    margin-top: 9px;
}

/* Content */
.content {
    flex: 1;
    min-width: 0;
    margin-left: 5px;
    border: 1px solid #808080;
    border-right-color: #e3e3e3;
    border-bottom-color: #e3e3e3;
    background: #fff;
}

.actions {
    display: flex;
    align-items: center;
    height: 26px;
    padding-left: 10px;
    border-bottom: 1px solid #a0a0a0;
    background: #f0f0f0;
}

.action {
    display: flex;
    align-items: center;
    gap: 7px;
    width: 60px;
    line-height: 18px;
}

.action svg {
    width: 22px;
    height: 24px;
}

.search-box {
    width: 144px;
    height: 15px;
    margin: 0 3px 0 2px;
    padding: 0 2px;
    border: none;
    background: #fff;
    font: inherit;
}

.files {
    display: flex;
    padding: 4px 1px;
}

.file {
    display: flex;
    flex-direction: column;
    align-items: center;
    gap: 2px;
    width: 75px;
    line-height: 18px;
    white-space: nowrap;
}

.file svg {
    width: 32px;
    height: 33px;
}

.file.selected span {
    width: 100%;
    background: #f0f0f0;
    text-align: center;
}

/* Status bar */
.statusbar {
    flex: none;
    display: flex;
    gap: 2px;
    height: 18px;
    border-top: 1px solid #fff;
    line-height: 17px;
}

.status-text {
    flex: 1;
    padding-left: 2px;
    border-right: 1px solid #a0a0a0;
    border-bottom: 1px solid #a0a0a0;
}

.status-cell {
    border: 1px solid #a0a0a0;
    border-right-color: #fff;
    border-bottom-color: #fff;
}

.status-cell.wide {
    width: 359px;
}

.status-cell.small {
    width: 28px;
}

.status-cell.num {
    width: 38px;
    padding-left: 2px;
    line-height: 16px;
}

.status-cell.last {
    width: 35px;
}

/* Taskbar */
.taskbar {
    flex: none;
    display: flex;
    align-items: center;
    height: 40px;
    border-top: 1px solid #30363f;
    background: linear-gradient(to right, #8094ae, #8499b3 40px, #a7c0de 60px, #a7c0dc calc(100% - 230px), #8195ad calc(100% - 200px));
}

.start {
    width: 54px;
    height: 38px;
    margin-right: 5px;
}

.start svg {
    width: 36px;
    height: 36px;
}

.task {
    display: flex;
    align-items: center;
    justify-content: center;
    width: 60px;
    height: 39px;
    margin-right: 2px;
}

.task svg {
    width: 32px;
    height: 32px;
}

.task.framed {
    border: 1px solid #5c7086;
    border-radius: 3px;
    background: linear-gradient(135deg, #d5e0ed, #b4c8df 50%, #a9c1dc);
    box-shadow: inset 0 0 0 1px #d9e6f3;
}

.task.stacked {
    width: 52px;
    margin-right: 10px;
    box-shadow: inset 0 0 0 1px #d9e6f3, 2px 0 0 #c3d5e8, 3px 0 0 #62778e;
}

.task.framed.current {
    background: linear-gradient(135deg, #fff, #dce5ef 60%, #d5e0ec);
}

.tray {
    display: flex;
    align-items: center;
    gap: 8px;
    margin-left: auto;
    color: #fff;
}

.tray svg {
    width: 17px;
    height: 16px;
}

.ime {
    width: 16px;
    height: 16px;
    margin-right: 3px;
    border-radius: 4px;
    background: #2680ff;
    font-weight: bold;
    line-height: 16px;
    text-align: center;
}

.clock {
    width: 75px;
    line-height: 18px;
    text-align: center;
}

.show-desktop {
    width: 14px;
    height: 39px;
    border: 1px solid #45566a;
    background: linear-gradient(135deg, #90a0b3, #52657c);
}

/* Dialog */
.dialog {
    position: fixed;
    top: 130px;
    left: 0;
    right: 1px;
    width: 448px;
    margin: 0 auto;
    border: 1px solid #111;
    border-radius: 6px 6px 0 0;
    background: #f0f0f0;
    box-shadow: inset -1px -1px #35c5e8, inset 1px 1px #b9d1ea;
}

.dialog-title {
    display: flex;
    align-items: center;
    height: 24px;
    margin: 0 2px;
    padding: 0 2px 0 4px;
    border-radius: 5px 5px 0 0;
    background: linear-gradient(#98b4d2, #b9d1ea);
}

.dialog-close {
    display: flex;
    align-items: center;
    justify-content: center;
    width: 31px;
    height: 17px;
    margin-left: auto;
    border: 1px solid #5c1b1d;
    border-radius: 2px;
    background: linear-gradient(#e3a69a 50%, #b9412b 50%, #d06d56);
    box-shadow: inset 0 0 0 1px #e9a99d;
}

.dialog-close svg {
    width: 12px;
    height: 10px;
    fill: #fff;
    stroke: #545c66;
}

.dialog-body {
    padding: 5px 8px 8px;
    font-family: "Noto Sans CJK SC", sans-serif;
}

.mono {
    font-family: "DejaVu Sans Mono", "Liberation Mono", monospace;
    font-size: 10px;
}

span.mono {
    line-height: 1px;
}

.tabs {
    display: flex;
    align-items: flex-end;
    padding-left: 2px;
}

.tab {
    width: 53px;
    height: 18px;
    border: 1px solid #fff;
    border-bottom: none;
    border-radius: 2px 2px 0 0;
    line-height: 17px;
    white-space: nowrap;
}

.tab.active {
    width: 56px;
    height: 20px;
    border-right: 2px solid #808080;
    line-height: 19px;
}

.tab-page {
    padding: 12px 13px 13px 14px;
    border: 1px solid #fff;
    border-right: 2px solid #808080;
    border-bottom: 2px solid #808080;
}

.tab-page h3 {
    padding-left: 3px;
}

.listbox {
    display: flex;
    border: 2px solid #808080;
    border-right: 1px solid #fff;
    border-bottom: 1px solid #fff;
    background: #fff;
    overflow: hidden;
}

.register-list {
    height: 76px;
    margin-top: 3px;
}

.list-view {
    flex: 1;
    overflow: hidden;
}

.listbox table {
    border-collapse: separate;
    border-spacing: 0;
    table-layout: fixed;
    line-height: 13px;
}

.register-table {
    width: 100%;
}

.listbox th {
    height: 15px;
    padding: 0 0 0 4px;
    border: 1px solid #fff;
    border-right: 2px solid #808080;
    border-bottom: 1px solid #808080;
    background: #f0f0f0;
    font-weight: normal;
    text-align: left;
}

.register-table th:first-child {
    width: 198px;
}

.register-table th:last-child {
    border-right: none;
}

.listbox td {
    height: 13px;
    padding: 0 0 0 5px;
    white-space: nowrap;
}

.listbox td:first-child {
    padding-left: 4px;
}

.register-table td > span {
    display: block;
    width: max-content;
    padding-right: 6px;
}

.register-table .selected td > span {
    background: #f0f0f0;
}

.list-buttons {
    display: flex;
    gap: 15px;
    padding: 14px 0 3px 19px;
}

.btn {
    height: 22px;
    border: 1px solid #fff;
    border-right: 2px solid #808080;
    border-bottom: 2px solid #808080;
    line-height: 18px;
}

.list-buttons .btn {
    width: 60px;
}

.btn.default {
    border-color: #696969;
    outline: 1px dotted #000;
    outline-offset: -4px;
}

.collect-list {
    height: 146px;
    margin-top: 5px;
}

.collect-table {
    width: 395px;
    align-self: flex-start;
}

.dialog-buttons {
    display: flex;
    justify-content: flex-end;
    gap: 5px;
    padding-top: 6px;
}

.dialog-buttons .btn {
    width: 75px;
}

/* Red frames and step numbers laid over the dialog */
.marked {
    position: relative;
}

.marked::after {
    content: "";
    position: absolute;
    border: 2px solid var(--red);
}

.mark-tab::after {
    inset: -2px 1px -3px 2px;
}

.mark-add::after {
    inset: -7px -12px -3px -2px;
}

.mark-stop::after {
    inset: -7px -4px -9px -8px;
}

.mark-ok::after {
    inset: -7px -5px -4px 0;
}

.step {
    position: absolute;
    color: var(--red);
    font-size: 16px;
}

.step-1 {
    top: 44px;
    left: 151px;
}

.step-2 {
    top: 182px;
    left: 21px;
}

.step-3 {
    top: 147px;
    left: 250px;
}
```
